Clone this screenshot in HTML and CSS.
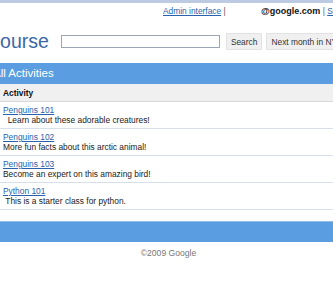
FILE: index.html
```html
<!DOCTYPE html>
<html lang="en">

<head>
    <meta charset="UTF-8">
    <meta name="viewport" content="width=device-width, initial-scale=1.0">
    <title>Course</title>
    <link rel="stylesheet" href="styles.css">
</head>

<body>
    <div class="page">
        <!-- Thanh liên kết trên cùng -->
        <div class="topbar">
            <a href="#">Admin interface</a> <span class="sep">|</span>
            <span class="user">@google.com</span> <span class="sep">|</span> <a href="#">Sign out</a>
        </div>

        <div class="header">
            <h1 class="title">Course</h1>
            <input class="search" type="text" />
            <button class="btn">Search</button>
            <button class="btn next">Next month in NYC</button>
        </div>

        <div class="bar">All Activities</div>

        <table class="list">
            <tr>
                <th>Activity</th>
            </tr>
            <tr>
                <td><a href="#">Penguins 101</a><div class="desc">&nbsp; Learn about these adorable creatures!</div></td>
            </tr>
            <tr>
                <td><a href="#">Penguins 102</a><div class="desc">More fun facts about this arctic animal!</div></td>
            </tr>
            <tr>
                <td><a href="#">Penguins 103</a><div class="desc">Become an expert on this amazing bird!</div></td>
            </tr>
            <tr>
                <td><a href="#">Python 101</a><div class="desc">&nbsp;This is a starter class for python.</div></td>
            </tr>
        </table>

        <div class="bar bottom"></div>

        <div class="footer">&copy;2009 Google</div>
    </div>
</body>

</html>
```

FILE: styles.css
```css
body {
    margin: 0;
    font-family: "Liberation Sans", Arial, sans-serif;
    background: #fff;
    overflow: hidden;
}

/* Trang rộng hơn cửa sổ, bị cắt bên trái */
.page {
    margin-left: -16px;
    width: 420px;
    border-top: 3px solid #bccbe2;
}

.topbar {
    height: 17px;
    line-height: 17px;
    font-size: 8.4px;
    color: #555;
    padding-left: 179px;
    white-space: nowrap;
}

.topbar a {
    color: #2a62ad;
}

.topbar .sep {
    margin-right: 33px;
}

.topbar .user + .sep {
    margin-right: 0;
}

.topbar .user {
    font-weight: bold;
    color: #111;
    font-size: 9px;
}

.header {
    display: flex;
    align-items: center;
    height: 43px;
    white-space: nowrap;
}

.title {
    margin: 0 0 0 2px;
    font-size: 19.5px;
    font-weight: normal;
    color: #3c68a6;
}

.search {
    margin-left: 12px;
    width: 157px;
    height: 11px;
    padding: 0;
    border: 1px solid #9aa5b5;
}

.btn {
    margin-left: 6px;
    height: 17px;
    padding: 0 4px;
    font-family: "Liberation Sans", Arial, sans-serif;
    font-size: 8.4px;
    color: #333;
    background: #f0f0f0;
    border: 1px solid #e2e2e2;
    border-radius: 1px;
}

.btn.next {
    margin-left: 4px;
}

.bar {
    height: 21px;
    line-height: 21px;
    background: #5a9de1;
    color: #fff;
    font-size: 11.5px;
    padding-left: 9px;
}

.list {
    width: 100%;
    border-collapse: collapse;
    font-size: 8.4px;
}

.list th {
    text-align: left;
    background: #f0f0f0;
    height: 17px;
    padding: 0 0 0 19px;
    font-weight: bold;
    color: #111;
    border-bottom: 1px solid #d8d8d8;
}

.list td {
    padding: 3px 0 3px 19px;
    line-height: 10px;
    border-bottom: 1px solid #d6dfea;
    color: #222;
}

.list a {
    color: #2a62ad;
}

.bar.bottom {
    margin-top: 11px;
    height: 20px;
    border-top: 1px solid #8fbdea;
}

.footer {
    text-align: center;
    font-size: 8.6px;
    color: #777;
    padding: 6px 0 0 0;
    width: 369px;
}
```
